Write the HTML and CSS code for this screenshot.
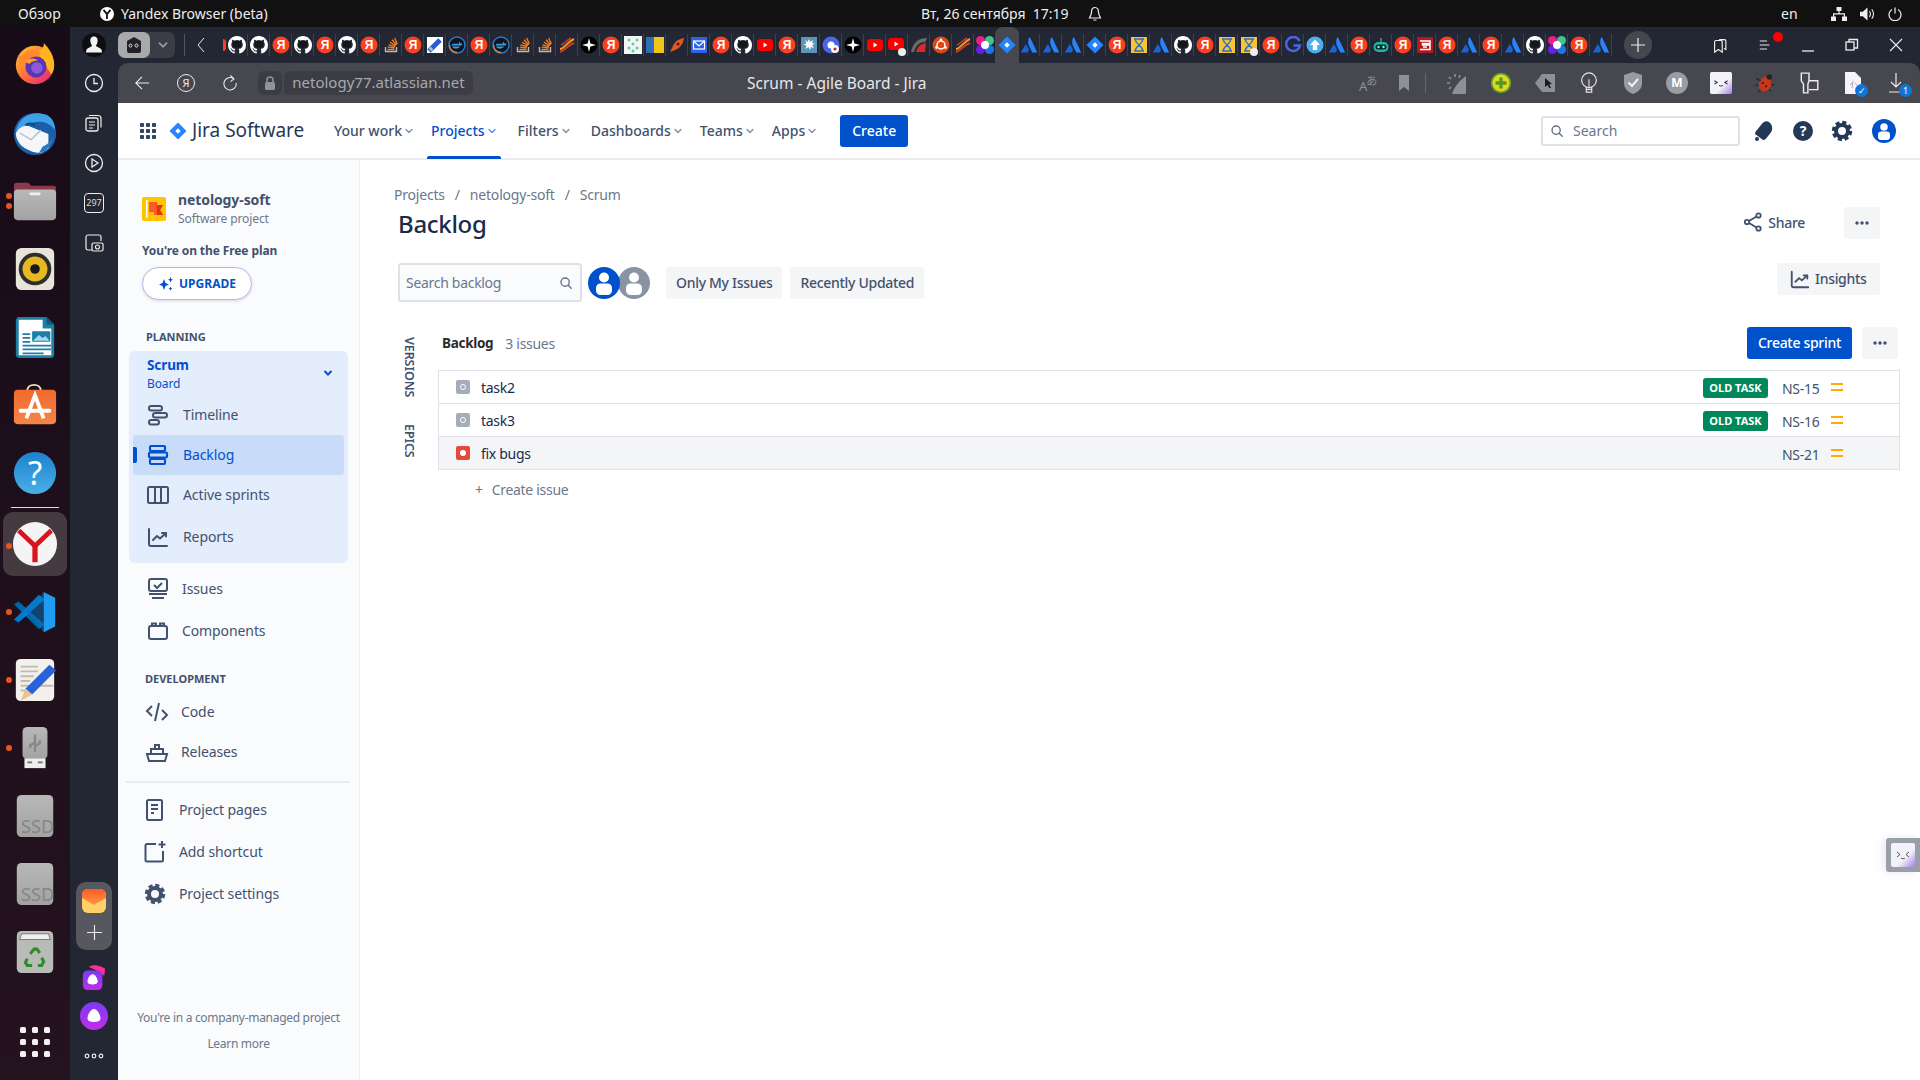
FILE: index.html
```html
<!DOCTYPE html>
<html lang="en">
<head>
<meta charset="utf-8">
<title>Scrum - Agile Board - Jira</title>
<link rel="stylesheet" href="styles.css">
</head>
<body>
<svg class="defs" width="0" height="0">
<defs>
<linearGradient id="fx" x1="0" y1="0" x2="1" y2="1"><stop offset="0" stop-color="#ffcb2d"/><stop offset=".5" stop-color="#ff7139"/><stop offset="1" stop-color="#e31587"/></linearGradient>
<linearGradient id="grey" x1="0" y1="0" x2="0" y2="1"><stop offset="0" stop-color="#b8b8b8"/><stop offset="1" stop-color="#a2a2a2"/></linearGradient>
<linearGradient id="help" x1="0" y1="0" x2="0" y2="1"><stop offset="0" stop-color="#1c82cf"/><stop offset="1" stop-color="#4aaee8"/></linearGradient>
<linearGradient id="orange" x1="0" y1="0" x2="0" y2="1"><stop offset="0" stop-color="#f06a2e"/><stop offset="1" stop-color="#f58549"/></linearGradient>
<linearGradient id="alice" x1="0" y1="0" x2="0" y2="1"><stop offset="0" stop-color="#7a3cf5"/><stop offset="1" stop-color="#c22ce8"/></linearGradient>
<linearGradient id="mail" x1="0" y1="0" x2="0" y2="1"><stop offset="0" stop-color="#fc5a2b"/><stop offset="1" stop-color="#ff9a3d"/></linearGradient>
<linearGradient id="kao" x1="0" y1="0" x2="1" y2="1"><stop offset=".6" stop-color="#f3f2fa"/><stop offset="1" stop-color="#a77be8"/></linearGradient>

<symbol id="ya" viewBox="0 0 18 18"><circle cx="9" cy="9" r="8.5" fill="#fc3f1d"/><text x="9" y="13.2" text-anchor="middle" font-size="12" font-weight="700" fill="#fff" font-family="Liberation Sans">Я</text></symbol>
<symbol id="gh" viewBox="0 0 16 16"><path fill="#fff" d="M8 0C3.58 0 0 3.58 0 8c0 3.54 2.29 6.53 5.47 7.59.4.07.55-.17.55-.38 0-.19-.01-.82-.01-1.49-2.01.37-2.53-.49-2.69-.94-.09-.23-.48-.94-.82-1.13-.28-.15-.68-.52-.01-.53.63-.01 1.08.58 1.23.82.72 1.21 1.87.87 2.33.66.07-.52.28-.87.51-1.07-1.78-.2-3.64-.89-3.64-3.95 0-.87.31-1.59.82-2.15-.08-.2-.36-1.02.08-2.12 0 0 .67-.21 2.2.82.64-.18 1.32-.27 2-.27.68 0 1.36.09 2 .27 1.53-1.04 2.2-.82 2.2-.82.44 1.1.16 1.92.08 2.12.51.56.82 1.27.82 2.15 0 3.07-1.87 3.75-3.65 3.95.29.25.54.73.54 1.48 0 1.07-.01 1.93-.01 2.2 0 .21.15.46.55.38A8.013 8.013 0 0016 8c0-4.42-3.58-8-8-8z"/><ellipse cx="8" cy="7.2" rx="3.9" ry="3.3" fill="#14161c"/></symbol>
<symbol id="so" viewBox="0 0 18 18"><path d="M3.5 11v4.5h11V11" fill="none" stroke="#bcbbbb" stroke-width="1.4"/><path d="M5.5 13.5h7M5.8 11.2l6.8 .7M6.5 8.8l6.5 1.8M8 6.2l5.8 3.4M10 3.8l4.6 5M12.6 2l2.8 6" stroke="#f48024" stroke-width="1.3" fill="none"/></symbol>
<symbol id="usbt" viewBox="0 0 18 18"><rect x="1" y="1" width="16" height="16" fill="#fff"/><path d="M3 15L14 4" stroke="#2a5bd7" stroke-width="5"/><path d="M4 14L6 12" stroke="#bbb" stroke-width="4"/></symbol>
<symbol id="dock" viewBox="0 0 18 18"><circle cx="9" cy="9" r="8" fill="#10141c" stroke="#2b7cc8" stroke-width="1.4"/><path d="M1.5 9A7.5 7.5 0 0 0 9 16.5" stroke="#e8813a" stroke-width="1.4" fill="none"/><path d="M3.5 9.5h9c1 0 1.8-1 2-1.8-.6-.3-1.2-.3-1.8 0C12 6 11 5.5 11 5.5v2.2H4.5zM4 10.5c1 2.4 6 3 8 0z" fill="#3a9fe0"/></symbol>
<symbol id="swirl" viewBox="0 0 18 18"><path d="M2 13C6 13 9 6 16 3" stroke="#e8a020" stroke-width="2" fill="none"/><path d="M2 16C7 14 10 9 16 7" stroke="#d23a2a" stroke-width="2" fill="none"/><path d="M3 9C6 8 9 4 13 2" stroke="#d23a2a" stroke-width="1.5" fill="none"/></symbol>
<symbol id="star" viewBox="0 0 18 18"><circle cx="9" cy="9" r="8.5" fill="#000"/><path d="M9 2l1.4 5.6L16 9l-5.6 1.4L9 16l-1.4-5.6L2 9l5.6-1.4z" fill="#fff"/></symbol>
<symbol id="dots" viewBox="0 0 18 18"><rect width="18" height="18" fill="#f2f7f4"/><g fill="#68c7a8"><circle cx="5" cy="4" r="1.5"/><circle cx="9" cy="8" r="1.5"/><circle cx="13" cy="12" r="1.5"/><circle cx="5" cy="12" r="1.5"/><circle cx="13" cy="4" r="1.5"/><circle cx="9" cy="15" r="1.5"/></g></symbol>
<symbol id="ua" viewBox="0 0 18 18"><rect y="1" width="8" height="16" fill="#2f6fb7"/><rect x="8" y="1" width="10" height="16" fill="#f0c419"/></symbol>
<symbol id="rocket" viewBox="0 0 18 18"><path d="M16 2C10 3 6 6 4.500 11L2 16l5-2c5-2 8-6 9-12z" fill="#e2591f"/><circle cx="10" cy="8" r="1.500" fill="#2a2a2a"/></symbol>
<symbol id="mailt" viewBox="0 0 18 18"><rect x="1" y="1" width="16" height="16" fill="#2c62e8"/><rect x="3.500" y="5" width="11" height="8" fill="none" stroke="#fff" stroke-width="1.200"/><path d="M3.500 5L9 10l5.500-5" fill="none" stroke="#fff" stroke-width="1.200"/></symbol>
<symbol id="yt" viewBox="0 0 18 18"><rect x="1" y="3" width="16" height="12" rx="3.500" fill="#f00"/><path d="M7.500 6.500v5l4-2.500z" fill="#fff"/></symbol>
<symbol id="ytd" viewBox="0 0 18 18"><rect x="0" y="2" width="16" height="12" rx="3.500" fill="#f00"/><path d="M6.500 5.500v5l4-2.500z" fill="#fff"/></symbol>
<symbol id="splat" viewBox="0 0 18 18"><rect x="1" y="1" width="16" height="16" fill="#5a96b8"/><path d="M9 3l1 3 3-2-1 3 3 1-3 1 2 3-3-1-1 3-1.500-3-3 2 1-3.500-3-1 3-1L5 4l2.500 2z" fill="#fff"/></symbol>
<symbol id="cg" viewBox="0 0 18 18"><circle cx="9" cy="9" r="8.500" fill="#4a65e8"/><circle cx="9" cy="9" r="3.500" fill="#fff"/><circle cx="13" cy="13" r="4" fill="#fff"/><circle cx="13" cy="13" r="1.600" fill="#e01e2e"/></symbol>
<symbol id="arc" viewBox="0 0 18 18"><path d="M1 16C3 6 9 2 17 2c-1 2-1 3-2 4-5 0-9 3-11 10z" fill="#6a6a6a"/><path d="M6 16C7 11 10 8 16 7l-1 9z" fill="#d42a2a"/></symbol>
<symbol id="ub" viewBox="0 0 18 18"><circle cx="9" cy="9" r="8.500" fill="#dd4814"/><circle cx="9" cy="9" r="4" fill="none" stroke="#fff" stroke-width="1.500"/><circle cx="9" cy="3.800" r="1.300" fill="#fff"/><circle cx="4.500" cy="11.600" r="1.300" fill="#fff"/><circle cx="13.500" cy="11.600" r="1.300" fill="#fff"/></symbol>
<symbol id="col" viewBox="0 0 18 18"><circle cx="4.500" cy="4.500" r="4.500" fill="#e91e8c"/><circle cx="13.500" cy="4.500" r="4.500" fill="#3ec78c"/><circle cx="4.500" cy="13.500" r="4.500" fill="#6a1ee8"/><circle cx="13.500" cy="13.500" r="4.500" fill="#1e74e8"/><circle cx="9" cy="9" r="4" fill="#fff"/></symbol>
<symbol id="jira" viewBox="0 0 18 18"><path d="M9 .5L17.500 9 9 17.500.5 9z" fill="#2684ff"/><path d="M9 6.300L11.700 9 9 11.700 6.300 9z" fill="#fff"/></symbol>
<symbol id="atl" viewBox="0 0 18 18"><path d="M9.300 1.300C7.700 4.500 7.800 7.500 9.300 10.500l3.100 6h4.800L10.300 2c-.3-.7-.8-.9-1-.7z" fill="#2684ff"/><path d="M5.500 8.500L.8 16.500h6.900l1.300-3C8 11.800 6.800 9.800 6.200 8.500c-.2-.3-.5-.3-.7 0z" fill="#1a62d6"/></symbol>
<symbol id="jen" viewBox="0 0 18 18"><rect x="1" y="1" width="16" height="16" fill="#f7c23c"/><path d="M4 3h10M5 3c1 6 7 6 8 12M13 3C12 9 6 9 5 15M4 15h10" stroke="#2c6fc0" stroke-width="1.500" fill="none"/></symbol>
<symbol id="g" viewBox="0 0 18 18"><path d="M15.500 5A7 7 0 1 0 16 9.500H9.500" fill="none" stroke="#4a65e8" stroke-width="2.400"/></symbol>
<symbol id="up" viewBox="0 0 18 18"><circle cx="9" cy="9" r="8.500" fill="#4aaef0"/><path d="M9 3.500L14 9h-2.800v5H6.800V9H4z" fill="#fff"/></symbol>
<symbol id="bot" viewBox="0 0 18 18"><rect x="1.500" y="6" width="15" height="10" rx="5" fill="#1fb8a8"/><rect x="3.500" y="8.500" width="11" height="5" rx="2.500" fill="#10242a"/><circle cx="6.500" cy="11" r="1.200" fill="#6fe"/><circle cx="11.500" cy="11" r="1.200" fill="#6fe"/><path d="M9 6V2" stroke="#aaa"/></symbol>
<symbol id="sq" viewBox="0 0 18 18"><rect x="1" y="1" width="16" height="16" fill="#b01a1a"/><path d="M4 5h10v2.500H6.500V9H14v4.500H4M7 11h4" stroke="#fff" stroke-width="1.500" fill="none"/></symbol>
<symbol id="chev" viewBox="0 0 10 10"><path d="M2 3.500L5 6.500 8 3.500" fill="none" stroke="currentColor" stroke-width="1.500" stroke-linecap="round"/></symbol>
<symbol id="mag" viewBox="0 0 16 16"><circle cx="7" cy="7" r="4.700" fill="none" stroke="currentColor" stroke-width="1.500"/><path d="M10.500 10.500L14 14" stroke="currentColor" stroke-width="1.500" stroke-linecap="round"/></symbol>
<symbol id="ava" viewBox="0 0 32 32"><circle cx="16" cy="16" r="16" fill="currentColor"/><circle cx="16" cy="10.500" r="5" fill="#fff"/><rect x="8" y="16.500" width="16" height="11.500" rx="4.500" fill="#fff"/></symbol>
<symbol id="more" viewBox="0 0 16 4"><g fill="#42526e"><circle cx="3" cy="2" r="1.700"/><circle cx="8" cy="2" r="1.700"/><circle cx="13" cy="2" r="1.700"/></g></symbol>
<symbol id="chart" viewBox="0 0 24 24"><path d="M3 4v15a2 2 0 0 0 2 2h16" fill="none" stroke="currentColor" stroke-width="2" stroke-linecap="round"/><path d="M7 15l4-4 3 2.500L20 8m-4 0h4v3.500" fill="none" stroke="currentColor" stroke-width="2" stroke-linecap="round" stroke-linejoin="round"/></symbol>
</defs>
</svg>

<header class="os-bar">
<span class="os-overview">Обзор</span>
<svg class="os-ya" viewBox="0 0 14 14"><circle cx="7" cy="7" r="7" fill="#fff"/><path d="M3.500 2.800L7 7l3.500-4.200M7 7v5" stroke="#111" stroke-width="1.800" fill="none"/></svg>
<span class="os-app">Yandex Browser (beta)</span>
<span class="os-clock">Вт, 26 сентября&nbsp; 17:19</span>
<svg class="os-bell" viewBox="0 0 14 16"><path d="M7 1.500c-2.500 0-3.500 2-3.500 4.500 0 3-1.500 4.500-2 6h11c-.5-1.500-2-3-2-6 0-2.500-1-4.500-3.500-4.500zM5.500 14h3" fill="none" stroke="#eee" stroke-width="1.200"/></svg>
<span class="os-lang">en</span>
<svg class="os-net" viewBox="0 0 16 14"><path fill="#eee" d="M5.500 0h5v4h-5zM0 9.500h5V14H0zM11 9.500h5V14h-5zM7.400 4h1.200v2.200H14v3.300h-1.200V7.400H3.200v2.100H2V6.200h5.400z"/></svg>
<svg class="os-vol" viewBox="0 0 16 14"><path fill="#eee" d="M0 4.500h3L8 0v14L3 9.500H0z"/><path d="M10 4c1.500 1.500 1.500 4.500 0 6M12.500 2c2.500 2.500 2.500 7.500 0 10" fill="none" stroke="#eee" stroke-width="1.200"/></svg>
<svg class="os-pow" viewBox="0 0 14 14"><path d="M4 2.500a6 6 0 1 0 6 0M7 .5v6" fill="none" stroke="#eee" stroke-width="1.200"/></svg>
</header>

<div class="desktop">
<nav class="dock">
<div class="dock-item"><svg class="dock-ic" viewBox="0 0 48 48"><circle cx="24" cy="24" r="20" fill="url(#fx)"/><path d="M33 1c7 7 11 14 11 23 0 4-1 7-3 10L26 10c5-2 8-5 7-9z" fill="#ffb51f"/><path d="M6 14c3 1 5 0 8-3 5-4 12-4 16 0l-8 8-14 6z" fill="#ff8a2d"/><circle cx="25" cy="26" r="11" fill="#5a34b4"/><circle cx="26" cy="27" r="6" fill="#8a5ad8"/><path d="M13 20c4-3 10-4 14-1-3 1-7 1-9 4z" fill="#ff9e2d"/></svg></div>
<div class="dock-item"><svg class="dock-ic" viewBox="0 0 48 48"><circle cx="24" cy="25" r="22" fill="#1a5fa8"/><path d="M4 22C8 6 22 0 36 5c6 3 9 9 9 16-6-8-14-10-23-8z" fill="#3fa2e8"/><path d="M4 24c3-6 10-9 14-7l20 8v15l-8 5C16 44 4 36 4 24z" fill="#f4f6fa"/><path d="M8 24l12 7 10-10" fill="none" stroke="#b5bfcc" stroke-width="1.500"/><path d="M32 38c5-2 10-6 12-12-2 10-8 18-16 19z" fill="#2878c8"/><path d="M14 16c3-3 8-2 10 0" fill="none" stroke="#0e4a8a" stroke-width="2"/></svg></div>
<div class="dock-item"><span class="dot two"></span><span class="dot two-b"></span><svg class="dock-ic" viewBox="0 0 48 48"><path d="M2 8a3 3 0 0 1 3-3h12l3 3h23a3 3 0 0 1 3 3v10H2z" fill="#8a3a4a"/><path d="M2 16a4 4 0 0 1 4-4h36a4 4 0 0 1 4 4v24a4 4 0 0 1-4 4H6a4 4 0 0 1-4-4z" fill="url(#grey)"/><rect x="18" y="15" width="12" height="3" rx="1.500" fill="#eee"/></svg></div>
<div class="dock-item"><svg class="dock-ic" viewBox="0 0 48 48"><rect x="4" y="2" width="40" height="44" rx="6" fill="#e8e4d8"/><circle cx="24" cy="24" r="17" fill="#2e2e2e"/><circle cx="24" cy="24" r="13" fill="#e8b820"/><circle cx="24" cy="24" r="5" fill="#1a1a1a"/></svg></div>
<div class="dock-item"><svg class="dock-ic" viewBox="0 0 48 48"><path d="M6 3h30l8 8v31a4 4 0 0 1-4 4H8a4 4 0 0 1-4-4V6z" fill="#1b7fa8"/><path d="M7 6h25v9h9v28H7z" fill="#fff"/><path d="M36 3l8 8h-8z" fill="#0f5a7c"/><path d="M11 21h8M11 25h8M11 29h8M11 33h30M11 37h30M11 41h22" stroke="#1b7fa8" stroke-width="1.800"/><rect x="21" y="18" width="19" height="11" rx="1" fill="#1b7fa8"/><path d="M22 28l6-6 4 3 3-2 4 5z" fill="#a8d8ee"/></svg></div>
<div class="dock-item"><svg class="dock-ic" viewBox="0 0 48 48"><path d="M16 9c0-8 14-8 14 0" fill="none" stroke="#eee3b0" stroke-width="2"/><rect x="2" y="8" width="44" height="36" rx="4" fill="url(#orange)"/><path d="M15 38L24 14l9 24" fill="none" stroke="#fff" stroke-width="4"/><path d="M9 30h30" stroke="#fff" stroke-width="4" stroke-linecap="round"/></svg></div>
<div class="dock-item"><svg class="dock-ic" viewBox="0 0 48 48"><circle cx="24" cy="24" r="22" fill="url(#help)"/><text x="24" y="37" text-anchor="middle" font-size="34" fill="#fff" font-family="Noto Sans">?</text></svg></div>
<div class="dock-sep"></div>
<div class="dock-item current"><span class="dot"></span><svg class="dock-ic" viewBox="0 0 48 48"><circle cx="24" cy="24" r="23" fill="#f4f4f4"/><path d="M7 10l17 16 17-16" fill="none" stroke="#d8141c" stroke-width="5"/><path d="M24 25v18" stroke="#d8141c" stroke-width="5.500"/></svg></div>
<div class="dock-item"><span class="dot"></span><svg class="dock-ic" viewBox="0 0 48 48"><path d="M2 16l5-3 27 24-6 5z" fill="#0065a9"/><path d="M2 32l5 3L34 11 28 6z" fill="#007acc"/><path d="M33 3l12 6v30l-12 6z" fill="#1f9cf0"/><path d="M33 3L16 24l17 21z" fill="#0e75bc" opacity=".5"/></svg></div>
<div class="dock-item"><span class="dot"></span><svg class="dock-ic" viewBox="0 0 48 48"><rect x="4" y="2" width="40" height="44" rx="5" fill="#f2f0ec"/><path d="M9 10h18M9 15h18M9 20h14M9 25h10M9 30h34M9 35h6" stroke="#c0bcb0" stroke-width="2"/><path d="M14 33l25-25 7 6-25 25z" fill="#2a62d8"/><path d="M14 33l-5 13 12-7z" fill="#f2c090"/></svg></div>
<div class="dock-item"><span class="dot"></span><svg class="dock-ic" viewBox="0 0 48 48"><rect x="11" y="2" width="26" height="34" rx="5" fill="url(#grey)"/><path d="M24 10v18M24 18l-5 3v3M24 22l5-3v-3" stroke="#888" stroke-width="2.500" fill="none"/><rect x="13" y="35" width="22" height="10" fill="#eee"/><rect x="16" y="38" width="5" height="2" fill="#777"/><rect x="27" y="38" width="5" height="2" fill="#777"/></svg></div>
<div class="dock-item"><svg class="dock-ic" viewBox="0 0 48 48"><rect x="5" y="2" width="38" height="44" rx="5" fill="url(#grey)"/><text x="44" y="42" text-anchor="end" font-size="19" fill="#868686" font-family="Noto Sans">SSD</text></svg></div>
<div class="dock-item"><svg class="dock-ic" viewBox="0 0 48 48"><rect x="5" y="2" width="38" height="44" rx="5" fill="url(#grey)"/><text x="44" y="42" text-anchor="end" font-size="19" fill="#868686" font-family="Noto Sans">SSD</text></svg></div>
<div class="dock-item"><svg class="dock-ic" viewBox="0 0 48 48"><rect x="5" y="2" width="38" height="44" rx="5" fill="#b9bbb6"/><path d="M8 11l2-6h28l2 6z" fill="#f0f0f0" stroke="#777"/><g fill="none" stroke="#2e8b2e" stroke-width="3.200"><path d="M19 26l4-5h3l3 4"/><path d="M31 30l2 4-2 4h-4"/><path d="M21 38h-5l-2-3 2-4"/></g></svg></div>
<div class="dock-item apps"><svg class="dock-ic" viewBox="0 0 34 34"><g fill="#f2f2f2"><rect x="2" y="2" width="6" height="6" rx="1.500"/><rect x="14" y="2" width="6" height="6" rx="1.500"/><rect x="26" y="2" width="6" height="6" rx="1.500"/><rect x="2" y="14" width="6" height="6" rx="1.500"/><rect x="14" y="14" width="6" height="6" rx="1.500"/><rect x="26" y="14" width="6" height="6" rx="1.500"/><rect x="2" y="26" width="6" height="6" rx="1.500"/><rect x="14" y="26" width="6" height="6" rx="1.500"/><rect x="26" y="26" width="6" height="6" rx="1.500"/></g></svg></div>
</nav>

<aside class="y-rail">
<svg class="y-avatar" viewBox="0 0 24 24"><circle cx="12" cy="12" r="12" fill="#0e0e10"/><path d="M12 3.500c3 0 4 2.500 3.600 5-.3 2-1 3.300-1.600 4 .2 1.400 3.400 2 5 3.500 1 1 1 3 1 3.500H4c0-.5 0-2.500 1-3.500 1.600-1.500 4.800-2.100 5-3.500-.6-.7-1.300-2-1.600-4-.4-2.500.6-5 3.600-5z" fill="#f2f2f2"/></svg>
<svg class="y-ic first" viewBox="0 0 20 20"><circle cx="10" cy="10" r="8.500" fill="none" stroke="#eee" stroke-width="1.300"/><path d="M10 5v5.500h4" fill="none" stroke="#eee" stroke-width="1.300"/></svg>
<svg class="y-ic" viewBox="0 0 20 20"><rect x="2" y="5" width="12" height="13" rx="2" fill="none" stroke="#eee" stroke-width="1.300"/><path d="M5 2.500h9a3 3 0 0 1 3 3v9M5 9h6M5 12h6M5 15h4" fill="none" stroke="#eee" stroke-width="1.200"/></svg>
<svg class="y-ic" viewBox="0 0 20 20"><circle cx="10" cy="10" r="8.500" fill="none" stroke="#eee" stroke-width="1.300"/><path d="M8 6l6 4-6 4z" fill="none" stroke="#eee" stroke-width="1.300"/></svg>
<span class="y-count">297</span>
<svg class="y-ic" viewBox="0 0 20 20"><path d="M8 17H4a2 2 0 0 1-2-2V4a2 2 0 0 1 2-2h11a2 2 0 0 1 2 2v4" fill="none" stroke="#eee" stroke-width="1.200"/><rect x="8" y="10" width="11" height="8" rx="1.500" fill="#232733" stroke="#eee" stroke-width="1.200"/><circle cx="13.500" cy="14" r="2" fill="none" stroke="#eee" stroke-width="1.100"/></svg>
<div class="y-spacer"></div>
<div class="y-group">
<svg class="y-mail" viewBox="0 0 24 24"><rect width="24" height="24" rx="6" fill="#ffd166"/><path d="M0 6a6 6 0 0 1 6-6h12a6 6 0 0 1 6 6v3l-12 7L0 9z" fill="url(#mail)"/></svg>
<svg class="y-plus" viewBox="0 0 16 16"><path d="M8 0v16M0 8h16" stroke="#eee" stroke-width="1.200"/></svg>
</div>
<svg class="y-alice1" viewBox="0 0 28 28"><path d="M8 3c5-3 12-2 18 2l-1 8-4-4z" fill="#ff2e93"/><rect x="2" y="7" width="21" height="21" rx="5" fill="url(#alice)"/><path d="M12.500 11c3 0 5.500 5 5.500 8 0 2-2.500 3-5.500 3S7 21 7 19c0-3 2.500-8 5.500-8z" fill="#fff"/></svg>
<svg class="y-alice2" viewBox="0 0 28 28"><circle cx="14" cy="14" r="14" fill="url(#alice)"/><path d="M14 7c3.500 0 6.500 6 6.500 9.500 0 2.500-3 3.500-6.500 3.500s-6.500-1-6.500-3.500C7.500 13 10.500 7 14 7z" fill="#fff"/></svg>
<svg class="y-dots" viewBox="0 0 20 6"><g fill="none" stroke="#eee" stroke-width="1.200"><circle cx="3" cy="3" r="1.800"/><circle cx="10" cy="3" r="1.800"/><circle cx="17" cy="3" r="1.800"/></g></svg>
</aside>

<div class="browser">
<div class="tabbar">
<div class="pill"><span class="pill-a"><svg viewBox="0 0 20 20" width="20" height="20"><path d="M3 6l7-4 7 4v10a2 2 0 0 1-2 2H5a2 2 0 0 1-2-2z" fill="#202228"/><path d="M8 10.500a1.500 1.500 0 1 0 0 .1 1.500 1.500 0 0 0 0-.1zM14 10.500a1.500 1.500 0 1 0 0 .1z" fill="none" stroke="#eee" stroke-width="1"/></svg></span><span class="pill-b"><svg width="12" height="12"><use href="#chev"/></svg></span></div>
<span class="tab-sep"></span>
<svg class="tab-back" viewBox="0 0 10 18"><path d="M8 2L2 9l6 7" fill="none" stroke="#eee" stroke-width="1"/></svg>
<span class="tab-slice"></span>
<div class="tabs">
<span class="tab"><svg><use href="#gh"/></svg></span><span class="tab"><svg><use href="#gh"/></svg></span><span class="tab"><svg><use href="#ya"/></svg></span><span class="tab"><svg><use href="#gh"/></svg></span><span class="tab"><svg><use href="#ya"/></svg></span><span class="tab"><svg><use href="#gh"/></svg></span><span class="tab"><svg><use href="#ya"/></svg></span><span class="tab"><svg><use href="#so"/></svg></span><span class="tab"><svg><use href="#ya"/></svg></span><span class="tab"><svg><use href="#usbt"/></svg></span><span class="tab"><svg><use href="#dock"/></svg></span><span class="tab"><svg><use href="#ya"/></svg></span><span class="tab"><svg><use href="#dock"/></svg></span><span class="tab"><svg><use href="#so"/></svg></span><span class="tab"><svg><use href="#so"/></svg></span><span class="tab"><svg><use href="#swirl"/></svg></span><span class="tab"><svg><use href="#star"/></svg></span><span class="tab"><svg><use href="#ya"/></svg></span><span class="tab"><svg><use href="#dots"/></svg></span><span class="tab"><svg><use href="#ua"/></svg></span><span class="tab"><svg><use href="#rocket"/></svg></span><span class="tab"><svg><use href="#mailt"/></svg></span><span class="tab"><svg><use href="#ya"/></svg></span><span class="tab"><svg><use href="#gh"/></svg></span><span class="tab"><svg><use href="#yt"/></svg></span><span class="tab"><svg><use href="#ya"/></svg></span><span class="tab"><svg><use href="#splat"/></svg></span><span class="tab"><svg><use href="#cg"/></svg></span><span class="tab"><svg><use href="#star"/></svg></span><span class="tab"><svg><use href="#yt"/></svg></span><span class="tab mute"><svg><use href="#ytd"/></svg></span><span class="tab"><svg><use href="#arc"/></svg></span><span class="tab"><svg><use href="#ub"/></svg></span><span class="tab"><svg><use href="#swirl"/></svg></span><span class="tab"><svg><use href="#col"/></svg></span><span class="tab active"><svg><use href="#jira"/></svg></span><span class="tab"><svg><use href="#atl"/></svg></span><span class="tab"><svg><use href="#atl"/></svg></span><span class="tab"><svg><use href="#atl"/></svg></span><span class="tab"><svg><use href="#jira"/></svg></span><span class="tab"><svg><use href="#ya"/></svg></span><span class="tab"><svg><use href="#jen"/></svg></span><span class="tab"><svg><use href="#atl"/></svg></span><span class="tab"><svg><use href="#gh"/></svg></span><span class="tab"><svg><use href="#ya"/></svg></span><span class="tab"><svg><use href="#jen"/></svg></span><span class="tab mute"><svg><use href="#jen"/></svg></span><span class="tab"><svg><use href="#ya"/></svg></span><span class="tab"><svg><use href="#g"/></svg></span><span class="tab"><svg><use href="#up"/></svg></span><span class="tab"><svg><use href="#atl"/></svg></span><span class="tab"><svg><use href="#ya"/></svg></span><span class="tab"><svg><use href="#bot"/></svg></span><span class="tab"><svg><use href="#ya"/></svg></span><span class="tab"><svg><use href="#sq"/></svg></span><span class="tab"><svg><use href="#ya"/></svg></span><span class="tab"><svg><use href="#atl"/></svg></span><span class="tab"><svg><use href="#ya"/></svg></span><span class="tab"><svg><use href="#atl"/></svg></span><span class="tab"><svg><use href="#gh"/></svg></span><span class="tab"><svg><use href="#col"/></svg></span><span class="tab"><svg><use href="#ya"/></svg></span><span class="tab"><svg><use href="#atl"/></svg></span>
</div>
<span class="tab-add"><svg viewBox="0 0 14 14" width="14" height="14"><path d="M7 0v14M0 7h14" stroke="#eee" stroke-width="1.200"/></svg></span>
<div class="win">
<svg viewBox="0 0 16 20"><path d="M7 4h6a1.500 1.500 0 0 1 1.500 1.500V15l-2-1M2 6.500A1.500 1.500 0 0 1 3.500 5H9a1.500 1.500 0 0 1 1.500 1.500V18l-4.250-3L2 18z" fill="none" stroke="#eee" stroke-width="1.300"/></svg>
<span class="win-menu"><svg viewBox="0 0 20 16"><path d="M1 3h9M1 8h12M1 13h9" stroke="#eee" stroke-width="1.200"/></svg><i></i></span>
<svg viewBox="0 0 16 16"><path d="M2 14h12" stroke="#eee" stroke-width="1.300"/></svg>
<svg viewBox="0 0 16 16"><rect x="2" y="5" width="8" height="8" fill="none" stroke="#eee" stroke-width="1.300"/><path d="M5 5V2.500h8.500V11H10" fill="none" stroke="#eee" stroke-width="1.300"/></svg>
<svg viewBox="0 0 16 16"><path d="M2 2l12 12M14 2L2 14" stroke="#eee" stroke-width="1.100"/></svg>
</div>
</div>

<div class="addr">
<svg class="a-ic" viewBox="0 0 18 18"><path d="M9 2L2 9l7 7M2 9h15" fill="none" stroke="#eee" stroke-width="1.200"/></svg>
<span class="a-ya">Я</span>
<svg class="a-ic" viewBox="0 0 18 18"><path d="M13.500 4.500A7 7 0 1 0 16 9M9.500 .5l4 4-4 3" fill="none" stroke="#eee" stroke-width="1.200"/></svg>
<span class="a-lock"><svg viewBox="0 0 12 14" width="12" height="14"><path d="M3 6V4a3 3 0 0 1 6 0v2" fill="none" stroke="#92939a" stroke-width="1.500"/><rect x="1" y="6" width="10" height="8" rx="1.500" fill="#92939a"/></svg></span>
<span class="a-url">netology77.atlassian.net</span>
<span class="a-title">Scrum - Agile Board - Jira</span>
<div class="a-tools">
<span class="a-tr">A<small>あ</small></span>
<svg class="t-ic" viewBox="0 0 12 18"><path d="M1 1h10v16l-5-4-5 4z" fill="#8f9095"/></svg>
<span class="t-sep"></span>
<svg class="t-ic big" viewBox="0 0 22 22"><path d="M20 4v18H6c2-7 8-14 14-18z" fill="#8f9095"/><path d="M9 2v3M3 5l2 2M1 11h3M3 17l2-2M14 3l-1 3" stroke="#8f9095" stroke-width="1.600"/></svg>
<svg class="t-ic big" viewBox="0 0 20 20"><circle cx="10" cy="10" r="8.500" fill="#e6d61e" stroke="#58a82e" stroke-width="1.500"/><path d="M10 5v10M5 10h10" stroke="#4b9a26" stroke-width="3"/></svg>
<svg class="t-ic big" viewBox="0 0 22 20"><path d="M8 1h13v18H8l-7-9z" fill="#8f9095" transform="translate(0 0)"/><path d="M11 5v9l2.500-2 2 3.500 1.500-1-2-3 3-.5z" fill="#1c1c1e"/></svg>
<svg class="t-ic big" viewBox="0 0 20 24"><circle cx="10" cy="9" r="8" fill="none" stroke="#e6e6e6" stroke-width="1.300"/><path d="M7 16v6h6v-6M10 16V8M7 19h6" fill="none" stroke="#e6e6e6" stroke-width="1.200"/></svg>
<svg class="t-ic big" viewBox="0 0 20 22"><path d="M10 0l9 3v8c0 6-4 9-9 11-5-2-9-5-9-11V3z" fill="#9a9ba0"/><path d="M5.500 10.500l3.500 3.500 6-7" fill="none" stroke="#f2f2f2" stroke-width="2"/></svg>
<span class="t-m">M</span>
<svg class="t-ic big" viewBox="0 0 20 20"><rect width="20" height="20" rx="1.500" fill="url(#kao)"/><path d="M4 8l2.500 1.500L4 11M16 8l-2.500 1.500L16 11M8.500 12c.5 1 2.500 1 3 0" fill="none" stroke="#333" stroke-width="1"/></svg>
<svg class="t-ic big" viewBox="0 0 20 20"><ellipse cx="10" cy="11" rx="5.500" ry="7" fill="#c8361c" transform="rotate(25 10 11)"/><circle cx="14" cy="4.500" r="2.500" fill="#222"/><path d="M2 6l4 2M1 12h3M4 18l2-2M15 18l-1-2M18 12l-2-1" stroke="#222"/><circle cx="8" cy="10" r="1" fill="#222"/><circle cx="11" cy="13" r="1" fill="#222"/></svg>
<svg class="t-ic big" viewBox="0 0 20 20"><path d="M3 1h7v7l-1 3v8H5V11L3 8zM10 8h8v8h-8" fill="none" stroke="#eee" stroke-width="1.300"/></svg>
<span class="t-badge-wrap"><svg class="t-ic big" viewBox="0 0 18 22"><path d="M1 0h10l6 6v16H1z" fill="#f4f4f6"/><path d="M6 13l2-2M9 9l-1 7M11 11l2 2" stroke="#c09ad8" stroke-width="1"/></svg><i class="t-check">✓</i></span>
<span class="t-badge-wrap"><svg class="t-ic big" viewBox="0 0 18 22"><path d="M8 1v14M3 10l5 5 5-5M1 20h14" fill="none" stroke="#eee" stroke-width="1.200"/></svg><i class="t-count">1</i></span>
</div>
</div>

<div class="page">
<header class="jnav">
<svg class="j-apps" viewBox="0 0 16 16"><g fill="#344563"><rect width="4" height="4" rx=".8"/><rect x="6" width="4" height="4" rx=".8"/><rect x="12" width="4" height="4" rx=".8"/><rect y="6" width="4" height="4" rx=".8"/><rect x="6" y="6" width="4" height="4" rx=".8"/><rect x="12" y="6" width="4" height="4" rx=".8"/><rect y="12" width="4" height="4" rx=".8"/><rect x="6" y="12" width="4" height="4" rx=".8"/><rect x="12" y="12" width="4" height="4" rx=".8"/></g></svg>
<svg class="j-logo" viewBox="0 0 18 18"><path d="M9 .5L17.500 9 9 17.500.5 9z" fill="#2684ff"/><path d="M9 6.300L11.700 9 9 11.700 6.300 9z" fill="#fff"/></svg>
<span class="j-brand">Jira Software</span>
<a class="j-link">Your work<svg><use href="#chev"/></svg></a>
<a class="j-link on">Projects<svg><use href="#chev"/></svg></a>
<a class="j-link wide">Filters<svg><use href="#chev"/></svg></a>
<a class="j-link">Dashboards<svg><use href="#chev"/></svg></a>
<a class="j-link">Teams<svg><use href="#chev"/></svg></a>
<a class="j-link">Apps<svg><use href="#chev"/></svg></a>
<button class="j-create">Create</button>
<div class="j-search"><svg><use href="#mag"/></svg><span>Search</span></div>
<svg class="j-ic bell" viewBox="0 0 24 24"><path d="M17 3c-3-2-6 0-8 3L5 11c-1.500 1.500-2 3-2 4l8 6c1 0 2.500-.5 3.500-2l4-5c2.500-3 2.500-8-1.500-11z" fill="#253858"/><circle cx="5" cy="20" r="2" fill="#253858"/></svg>
<svg class="j-ic" viewBox="0 0 24 24"><circle cx="12" cy="12" r="10" fill="#253858"/><text x="12" y="17" text-anchor="middle" font-size="14" font-weight="700" fill="#fff" font-family="Noto Sans">?</text></svg>
<svg class="j-ic" viewBox="0 0 24 24"><circle cx="12" cy="12" r="6" fill="none" stroke="#253858" stroke-width="4"/><circle cx="12" cy="12" r="8.500" fill="none" stroke="#253858" stroke-width="3.500" stroke-dasharray="4 2.670"/></svg>
<svg class="j-ava"><use href="#ava"/></svg>
</header>

<div class="jbody">
<aside class="side">
<div class="proj">
<svg class="proj-ic" viewBox="0 0 24 24"><rect width="24" height="24" rx="2" fill="#ffc400"/><rect x="4" y="3" width="1.500" height="18" fill="#fff"/><path d="M7 5h8v3h6l-3 5 3 5H12v-3H7z" fill="#ff5630"/><path d="M15 8h6l-3 5 3 5h-6z" fill="#de350b"/></svg>
<div><div class="proj-name">netology-soft</div><div class="proj-sub">Software project</div></div>
</div>
<div class="plan">You're on the Free plan</div>
<button class="upgrade"><svg viewBox="0 0 16 16" width="16" height="16"><path d="M6 3l1.500 4L11 8.500 7.500 10 6 14 4.500 10 1 8.500 4.500 7zM12.500 1l.8 2 1.700.8-1.700.7-.8 2-.8-2L10 3.800l1.700-.8zM12.500 10.500l.6 1.500 1.400.6-1.400.6-.6 1.500-.6-1.500-1.400-.6 1.400-.6z" fill="#0052cc"/></svg>UPGRADE</button>
<h4 class="sec plan-h">PLANNING</h4>
<div class="board">
<div class="board-head"><div><div class="b-name">Scrum</div><div class="b-sub">Board</div></div><svg viewBox="0 0 10 10" width="10" height="10"><path d="M1.500 3L5 6.500 8.500 3" fill="none" stroke="#0052cc" stroke-width="2"/></svg></div>
<a class="item in"><svg viewBox="0 0 24 24"><g fill="none" stroke="currentColor" stroke-width="2"><rect x="3" y="3" width="13" height="4.500" rx="2.200"/><rect x="7" y="10" width="14" height="4.500" rx="2.200"/><rect x="3" y="17" width="10" height="4.500" rx="2.200"/></g></svg>Timeline</a>
<a class="item in sel"><svg viewBox="0 0 24 24"><g fill="none" stroke="currentColor" stroke-width="2.200"><rect x="4" y="3" width="15" height="5" rx="1"/><rect x="3" y="9.500" width="18" height="5" rx="1"/><rect x="4" y="16" width="15" height="5" rx="1"/></g></svg>Backlog</a>
<a class="item in"><svg viewBox="0 0 24 24"><g fill="none" stroke="currentColor" stroke-width="2"><rect x="2" y="4" width="20" height="16" rx="1.500"/><path d="M9 4v16M15 4v16"/></g></svg>Active sprints</a>
<a class="item in rep"><svg><use href="#chart"/></svg>Reports</a>
</div>
<a class="item out top"><svg viewBox="0 0 24 24"><g fill="none" stroke="currentColor" stroke-width="2"><rect x="3" y="2" width="18" height="12" rx="2"/><path d="M8 8l3 3 5-5M3 17h18M6 21h12"/></g></svg>Issues</a>
<a class="item out"><svg viewBox="0 0 24 24"><g fill="none" stroke="currentColor" stroke-width="2"><rect x="3" y="7" width="18" height="13" rx="2"/><path d="M6 7V4.500h4V7M14 7V4.500h4V7"/></g></svg>Components</a>
<h4 class="sec dev-h">DEVELOPMENT</h4>
<a class="item dev"><svg viewBox="0 0 24 24"><path d="M7 6l-5 5 5 5M17 10l5 5-5 5M14 3L10 21" fill="none" stroke="currentColor" stroke-width="2"/></svg>Code</a>
<a class="item dev"><svg viewBox="0 0 24 24"><g fill="none" stroke="currentColor" stroke-width="2"><path d="M2 14h20l-2 7H4zM6 14V9h12v5M10 9V5h4v4"/></g></svg>Releases</a>
<div class="side-rule"></div>
<a class="item low"><svg viewBox="0 0 24 24"><g fill="none" stroke="currentColor" stroke-width="2"><rect x="4" y="2" width="15" height="20" rx="1.500"/><path d="M8 7h7M8 11h7M8 15h3"/></g></svg>Project pages</a>
<a class="item low"><svg viewBox="0 0 24 24"><path d="M13 4H4a1.500 1.500 0 0 0-1.500 1.500V20A1.500 1.500 0 0 0 4 21.500h14.500A1.500 1.500 0 0 0 20 20V11M19 1v7M15.500 4.500h7" fill="none" stroke="currentColor" stroke-width="2"/></svg>Add shortcut</a>
<a class="item low"><svg viewBox="0 0 24 24"><circle cx="12" cy="12" r="6" fill="none" stroke="currentColor" stroke-width="4"/><circle cx="12" cy="12" r="8.500" fill="none" stroke="currentColor" stroke-width="3.500" stroke-dasharray="4 2.670"/></svg>Project settings</a>
<div class="side-foot"><div>You're in a company-managed project</div><div class="learn">Learn more</div></div>
</aside>

<main class="main">
<div class="crumbs"><a>Projects</a><i>/</i><a>netology-soft</a><i>/</i><a>Scrum</a></div>
<div class="title-row">
<h1>Backlog</h1>
<div class="title-act">
<a class="share"><svg viewBox="0 0 20 20" width="20" height="20"><g fill="none" stroke="#42526e" stroke-width="1.800"><circle cx="4" cy="10" r="2.200"/><circle cx="15.500" cy="3.500" r="2.200"/><circle cx="15.500" cy="16.500" r="2.200"/><path d="M6 9l7.500-4.500M6 11l7.500 4.500"/></g></svg>Share</a>
<button class="btn square"><svg width="16" height="4"><use href="#more"/></svg></button>
</div>
</div>
<div class="tools">
<div class="q"><span>Search backlog</span><svg><use href="#mag"/></svg></div>
<div class="avas"><svg class="blue"><use href="#ava"/></svg><svg class="gray"><use href="#ava"/></svg></div>
<button class="btn f1">Only My Issues</button>
<button class="btn">Recently Updated</button>
<button class="btn ins"><svg><use href="#chart"/></svg>Insights</button>
</div>
<div class="board-area">
<div class="rail"><span>VERSIONS</span><span>EPICS</span></div>
<div class="list-wrap">
<div class="list-head">
<strong>Backlog</strong><span class="cnt">3 issues</span>
<button class="btn primary">Create sprint</button>
<button class="btn square"><svg width="16" height="4"><use href="#more"/></svg></button>
</div>
<div class="issues">
<div class="issue"><span class="ty gray-t"><i></i></span><span class="summ">task2</span><span class="loz">OLD TASK</span><span class="key">NS-15</span><span class="pri"></span></div>
<div class="issue"><span class="ty gray-t"><i></i></span><span class="summ">task3</span><span class="loz">OLD TASK</span><span class="key">NS-16</span><span class="pri"></span></div>
<div class="issue hi"><span class="ty red-t"><i></i></span><span class="summ">fix bugs</span><span class="key">NS-21</span><span class="pri"></span></div>
</div>
<div class="create"><span>+</span>Create issue</div>
</div>
</div>
<div class="float"><svg viewBox="0 0 24 24"><rect width="24" height="24" rx="2" fill="url(#kao)"/><path d="M6 9l3 2.500L6 14M18 9l-3 2.500 3 2.500M10 15c1 1 3 1 4 0" fill="none" stroke="#555" stroke-width="1"/></svg></div>
</main>
</div>
</div>
</div>
</div>
</body>
</html>
```
FILE: styles.css
```css
* { box-sizing: border-box; }
html, body { margin: 0; padding: 0; }
body {
  width: 1920px; height: 1080px; overflow: hidden;
  display: flex; flex-direction: column;
  font-family: "Noto Sans", "Open Sans", sans-serif;
  background: #111;
}
.defs { position: absolute; }
button { font-family: inherit; border: 0; cursor: pointer; }
a { color: inherit; text-decoration: none; }
i { font-style: normal; }

/* system bar */
.os-bar { flex: 0 0 27px; background: #111; color: #eee; display: flex; align-items: center; font-size: 14px; }
.os-overview { margin-left: 18px; width: 82px; }
.os-ya { width: 14px; height: 14px; margin-right: 7px; }
.os-app { width: 800px; }
.os-clock { width: 170px; text-align: left; white-space: nowrap; }
.os-bell { width: 14px; height: 16px; margin-left: -3px; }
.os-lang { margin-left: 679px; width: 45px; }
.os-net { width: 16px; height: 14px; margin-left: 5px; }
.os-vol { width: 15px; height: 14px; margin-left: 13px; }
.os-pow { width: 14px; height: 14px; margin-left: 13px; }

.desktop { flex: 1; display: flex; min-height: 0; }

/* dock */
.dock { flex: 0 0 70px; background: linear-gradient(#170b17, #24131f); padding: 4px 0; display: flex; flex-direction: column; align-items: center; }
.dock-item { position: relative; width: 64px; height: 68px; flex: none; display: flex; align-items: center; justify-content: center; border-radius: 10px; }
.dock-ic { width: 46px; height: 46px; }
.dock-sep { width: 48px; height: 1px; background: #ddd; margin: 0 0 2px; flex: none; }
.dock-item.current { background: #443a3f; height: 64px; margin: 2px 0; }
.dot { position: absolute; left: 3px; top: 31px; width: 6px; height: 6px; border-radius: 50%; background: #e95420; }
.dot.two { top: 26px; }
.dot.two-b { top: 36px; }
.apps { margin-top: auto; }
.apps .dock-ic { width: 34px; height: 34px; }

/* yandex rail */
.y-rail { flex: 0 0 48px; background: #232733; display: flex; flex-direction: column; align-items: center; padding: 4px 0 0; }
.y-avatar { width: 24px; height: 24px; flex: none; margin-top: 2px; }
.y-ic { width: 20px; height: 20px; flex: none; margin-bottom: 20px; }
.y-ic.first { margin-top: 16px; }
.y-count { flex: none; width: 20px; height: 20px; border: 1.300px solid #eee; border-radius: 4px; color: #ddd; font-size: 9px; line-height: 17px; text-align: center; margin-bottom: 20px; }
.y-spacer { flex: 1; }
.y-group { width: 36px; height: 68px; flex: none; background: #57585f; border-radius: 10px; display: flex; flex-direction: column; align-items: center; padding-top: 7px; }
.y-mail { width: 24px; height: 24px; }
.y-plus { width: 15px; height: 15px; margin-top: 12px; }
.y-alice1 { width: 26px; height: 28px; margin-top: 13px; flex: none; }
.y-alice2 { width: 28px; height: 28px; margin-top: 11px; flex: none; }
.y-dots { width: 20px; height: 6px; margin: 23px 0 21px; flex: none; }

/* browser */
.browser { flex: 1; min-width: 0; display: flex; flex-direction: column; background: #232733; }
.tabbar { flex: 0 0 36px; display: flex; align-items: center; position: relative; }
.pill { width: 57px; height: 26px; background: #3b3d46; border-radius: 7px; display: flex; flex: none; }
.pill-a { width: 32px; background: #a9a9ab; border-radius: 7px; display: flex; align-items: center; justify-content: center; }
.pill-b { flex: 1; display: flex; align-items: center; justify-content: center; color: #999; }
.tab-sep { width: 1px; height: 22px; background: #555; margin-left: 9px; flex: none; }
.tab-back { width: 10px; height: 18px; margin-left: 11px; flex: none; }
.tab-slice { width: 3px; height: 12px; background: #fc3f1d; margin-left: 17px; border-radius: 0 6px 6px 0; flex: none; }
.tabs { display: flex; align-items: center; height: 100%; flex: none; }
.tab { width: 22px; height: 22px; border-right: 1px solid #3c404b; display: flex; align-items: center; justify-content: center; flex: none; position: relative; }
.tab svg { width: 18px; height: 18px; }
.tab.active { align-self: stretch; height: auto; width: 24px; margin: 0 -1px; background: #46474f; border: 0; border-radius: 8px 8px 0 0; z-index: 1; }
.tab.mute::after { content: ""; position: absolute; right: 1px; bottom: 0; width: 8px; height: 8px; border-radius: 50%; background: #eee; }
.tab-add { width: 28px; height: 28px; border-radius: 50%; background: #45464e; display: flex; align-items: center; justify-content: center; margin-left: 12px; flex: none; }
.win { margin-left: 60px; display: flex; align-items: center; gap: 28px; }
.win > svg, .win-menu svg { width: 16px; height: 18px; display: block; }
.win-menu { position: relative; display: block; margin-left: 3px; margin-right: -3px; }
.win-menu i { position: absolute; right: -8px; top: -4px; width: 10px; height: 10px; background: #f00; border-radius: 50%; }

.addr { flex: 0 0 40px; background: #46474f; border-radius: 10px 10px 0 0; display: flex; align-items: center; padding-left: 16px; position: relative; }
.a-ic { width: 16px; height: 16px; flex: none; }
.a-ya { width: 18px; height: 18px; border: 1.200px solid #eee; border-radius: 50%; color: #eee; font-size: 11px; line-height: 15px; text-align: center; margin: 0 27px; flex: none; }
.a-lock { width: 24px; height: 24px; background: #3b3c44; border-radius: 6px; display: flex; align-items: center; justify-content: center; margin-left: 20px; flex: none; }
.a-url { height: 24px; width: 189px; background: #3b3c44; border-radius: 6px; color: #a8a9ad; font-size: 15px; line-height: 23px; text-align: center; margin-left: 2px; flex: none; white-space: nowrap; }
.a-title { width: 452px; padding-left: 274px; color: #e8e8ea; font-size: 15.500px; white-space: nowrap; flex: none; }
.a-tools { display: flex; align-items: center; margin-left: 434px; flex: none; }
.a-tr { width: 16px; margin-right: 23px; color: #8f9095; font-size: 13px; line-height: 1; padding-top: 6px; white-space: nowrap; }
.a-tr small { font-family: "Noto Sans CJK JP", sans-serif; font-size: 11px; position: relative; top: -6px; margin-left: -1px; }
.t-ic { width: 12px; height: 18px; flex: none; }
.t-sep { width: 1px; height: 20px; background: #66676e; margin: 0 20px 0 15px; }
.t-ic.big { width: 22px; height: 22px; margin-right: 22px; }
.t-m { width: 22px; height: 22px; background: #9a9ba4; border-radius: 50%; color: #fff; font-size: 12px; font-weight: 700; text-align: center; line-height: 22px; margin-right: 22px; }
.t-badge-wrap { position: relative; display: flex; }
.t-badge-wrap i { position: absolute; left: 13px; bottom: -3px; width: 13px; height: 13px; border-radius: 50%; background: #0b78d8; color: #fff; font-size: 9px; text-align: center; line-height: 13px; }

/* page */
.page { flex: 1; background: #fff; display: flex; flex-direction: column; min-height: 0; }
.jnav { flex: 0 0 57px; border-bottom: 2px solid #ebecf0; display: flex; align-items: center; color: #42526e; font-size: 14px; }
.j-apps { width: 16px; height: 16px; margin-left: 22px; flex: none; }
.j-logo { width: 18px; height: 18px; margin-left: 13px; flex: none; }
.j-brand { font-size: 19px; color: #253858; margin-left: 5px; width: 138px; flex: none; white-space: nowrap; padding-bottom: 2px; }
.j-link { height: 100%; display: flex; align-items: center; padding: 0 4px; margin-right: 9px; font-weight: 500; white-space: nowrap; position: relative; }
.j-link svg { width: 10px; height: 10px; margin-left: 2px; color: #8993a4; }
.j-link.on { color: #0052cc; margin-right: 13px; }
.j-link.wide { margin-right: 12px; }
.j-link.on svg { color: #4c9aff; }
.j-link.on::after { content: ""; position: absolute; left: 0; right: 0; bottom: -1px; height: 3px; background: #0052cc; border-radius: 2px 2px 0 0; }
.j-create { width: 68px; height: 32px; background: #0052cc; color: #fff; font-size: 14px; font-weight: 500; border-radius: 3px; margin-left: 10px; flex: none; }
.j-search { width: 199px; height: 30px; border: 2px solid #dfe1e6; border-radius: 3px; display: flex; align-items: center; margin-left: auto; padding-left: 7px; color: #6b778c; flex: none; }
.j-search svg { width: 14px; height: 14px; margin-right: 9px; color: #5e6c84; }
.j-ic { width: 24px; height: 24px; margin-left: 15px; flex: none; }
.j-ic.bell { margin-left: 12px; }
.j-ava { width: 24px; height: 28px; margin: 0 24px 0 18px; color: #0052cc; flex: none; }

.jbody { flex: 1; display: flex; min-height: 0; }
.side { flex: 0 0 242px; background: #fafbfc; border-right: 1px solid #ebecf0; color: #42526e; font-size: 14px; display: flex; flex-direction: column; letter-spacing: -.1px; }
.proj { display: flex; align-items: center; gap: 12px; margin: 29px 0 0 24px; height: 40px; }
.proj-ic { width: 24px; height: 24px; flex: none; }
.proj-name { font-weight: 700; color: #42526e; line-height: 19px; }
.proj-sub { font-size: 12px; color: #6b778c; line-height: 20px; }
.plan { font-size: 12px; font-weight: 700; margin: 13px 0 0 24px; height: 18px; line-height: 18px; }
.upgrade { width: 110px; height: 33px; margin: 7px 0 0 24px; border-radius: 17px; background: #fff; color: #0052cc; font-size: 12px; font-weight: 700; border: 1.500px solid #b9b3ec; box-shadow: 0 1px 3px rgba(9,30,66,.15); display: flex; align-items: center; justify-content: center; gap: 5px; letter-spacing: 0; }
.sec { margin: 0; font-size: 11px; font-weight: 700; color: #42526e; line-height: 16px; letter-spacing: 0; }
.plan-h { margin: 29px 0 6px 28px; }
.board { margin-left: 11px; width: 219px; height: 212px; background: #e4edfb; border-radius: 6px; padding: 0 4px; flex: none; }
.board-head { height: 44px; display: flex; align-items: center; justify-content: space-between; padding: 0 11px 0 14px; color: #0052cc; }
.b-name { font-weight: 700; line-height: 20px; margin-top: 2px; font-size: 13.500px; }
.b-sub { font-size: 12px; line-height: 18px; }
.item { height: 40px; display: flex; align-items: center; gap: 12px; flex: none; color: #42526e; position: relative; padding-bottom: 1px; }
.item svg { width: 24px; height: 24px; flex: none; }
.item.in { padding-left: 13px; gap: 13px; }
.item.sel { background: #c8dcfa; color: #0052cc; border-radius: 3px; }
.item.sel::before { content: ""; position: absolute; left: 0; top: 12px; width: 4px; height: 16px; background: #0052cc; border-radius: 0 2px 2px 0; }
.item.rep { margin-top: 2px; }
.item.out { padding-left: 28px; height: 42px; }
.item.top { margin-top: 5px; }
.dev-h { margin: 19px 0 0 27px; height: 20px; }
.item.dev { padding-left: 27px; height: 40px; }
.dev-h + .item { margin-top: 1px; }
.side-rule { height: 2px; background: #ebecf0; margin: 9px 9px 6px 8px; flex: none; }
.item.low { padding-left: 25px; height: 42px; }
.side-foot { margin-top: auto; margin-bottom: 28px; text-align: center; font-size: 12px; color: #6b778c; line-height: 16px; letter-spacing: -.3px; }
.learn { margin-top: 10px; }

.main { flex: 1; min-width: 0; padding: 24px 20px 0 34px; position: relative; color: #42526e; font-size: 14px; }
.crumbs { height: 20px; display: flex; align-items: center; color: #6b778c; letter-spacing: -.2px; }
.crumbs i { margin: 0 10px; }
.title-row { height: 37px; margin-left: 4px; display: flex; align-items: center; justify-content: space-between; padding-right: 20px; }
h1 { margin: 3px 0 0; font-size: 24px; font-weight: 500; color: #172b4d; line-height: 36px; letter-spacing: -.3px; }
.title-act { display: flex; align-items: center; gap: 39px; }
.share { display: flex; align-items: center; gap: 5px; font-weight: 500; letter-spacing: -.3px; padding-bottom: 1px; }
.btn { height: 32px; padding: 0 10px 1px; background: #f4f5f7; color: #42526e; font-size: 14px; font-weight: 500; border-radius: 3px; letter-spacing: -.3px; white-space: nowrap; display: inline-flex; align-items: center; flex: none; }
.btn.square { width: 36px; padding: 0; justify-content: center; }
.tools { margin: 22px 0 0 4px; display: flex; align-items: flex-start; padding-right: 20px; }
.q { width: 184px; height: 39px; background: #fafbfc; border: 2px solid #dfe1e6; border-radius: 3px; display: flex; align-items: center; justify-content: space-between; padding: 0 7px 0 6px; color: #6b778c; letter-spacing: -.3px; }
.q svg { width: 14px; height: 14px; color: #5e6c84; }
.avas { display: flex; margin: 4px 0 0 6px; }
.avas svg { width: 32px; height: 32px; }
.avas .blue { color: #0052cc; position: relative; z-index: 1; }
.avas .gray { color: #8993a4; margin-left: -2px; }
.tools .btn { margin-top: 4px; }
.btn.f1 { margin-left: 16px; margin-right: 8px; }
.tools .btn.ins { margin: 0 0 0 auto; gap: 4px; width: 103px; padding-left: 12px; }
.btn.ins svg { width: 22px; height: 22px; }
.board-area { display: flex; margin: 25px 0 0 4px; }
.rail { width: 40px; flex: none; display: flex; flex-direction: column; align-items: flex-start; gap: 27px; padding: 10px 0 0 4px; }
.rail span { writing-mode: vertical-rl; font-size: 12.500px; font-weight: 600; color: #42526e; line-height: 14px; letter-spacing: -.1px; }
.list-wrap { flex: 1; min-width: 0; }
.list-head { height: 32px; display: flex; align-items: center; gap: 10px; padding: 0 2px 0 4px; }
.list-head strong { font-weight: 700; color: #2b2b2b; font-size: 13.500px; letter-spacing: -.3px; margin-right: 2px; }
.list-head .cnt { color: #6b778c; letter-spacing: -.3px; margin-right: auto; }
.btn.primary { background: #0052cc; color: #fff; height: 32px; width: 105px; justify-content: center; padding: 0 0 1px; }
.issues { margin-top: 11px; border: 1px solid #dfe1e6; border-bottom: 0; }
.issue { height: 33px; border-bottom: 1px solid #dfe1e6; display: flex; align-items: center; padding-left: 17px; color: #172b4d; letter-spacing: -.3px; }
.issue.hi { background: #f4f5f7; }
.ty { width: 14px; height: 14px; border-radius: 2px; display: flex; align-items: center; justify-content: center; flex: none; }
.ty i { width: 6px; height: 6px; border-radius: 50%; }
.gray-t { background: #a5adba; }
.gray-t i { border: 1.200px solid #fff; }
.red-t { background: #e5493a; }
.red-t i { background: #fff; }
.summ { margin-left: 11px; margin-right: auto; }
.loz { width: 65px; height: 20px; background: #00875a; color: #fff; font-size: 11px; font-weight: 700; border-radius: 3px; text-align: center; line-height: 20px; letter-spacing: 0; margin-top: 2px; }
.key { color: #42526e; margin-left: 14px; width: 49px; margin-top: 2px; }
.pri { width: 12px; height: 8px; border-top: 2px solid #ffab00; border-bottom: 2px solid #ffab00; margin-right: 56px; margin-top: -1px; }
.create { margin: 10px 0 0 37px; height: 20px; line-height: 20px; color: #6b778c; letter-spacing: -.3px; }
.create span { margin-right: 9px; }
.float { position: absolute; right: 0; top: 678px; width: 34px; height: 34px; background: #9aa0a8; border-radius: 3px 0 0 3px; padding: 5px; box-shadow: -3px 0 8px rgba(160,120,230,.2); }
.float svg { display: block; width: 24px; height: 24px; }
```
